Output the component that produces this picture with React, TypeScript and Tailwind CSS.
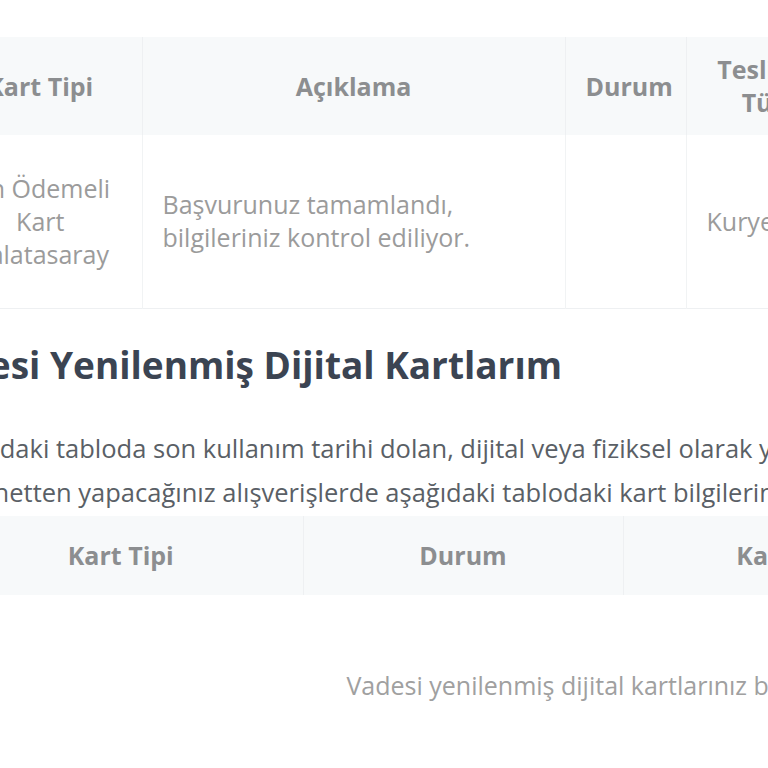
const font = { fontFamily: '"Open Sans", "Liberation Sans", sans-serif' };

const thCls =
  'bg-[#f7f9fa] border-r border-[#eef0f2] px-5 text-center align-middle text-[25px] leading-[33px] font-bold text-[#8c8e90]';

const tdCls = 'border-r border-[#f1f3f4] px-5 text-[25px] leading-[33px] text-[#9b9b9b]';

function CardsTable() {
  return (
    <table className="table-fixed border-collapse w-[1385px]">
      <colgroup>
        <col className="w-[203px]" />
        <col className="w-[423px]" />
        <col className="w-[121px]" />
        <col className="w-[170px]" />
        <col className="w-[212px]" />
        <col className="w-[256px]" />
      </colgroup>
      <thead>
        <tr className="h-[98px]">
          <th className={thCls}>Kart Tipi</th>
          <th className={thCls}>Açıklama</th>
          <th className={thCls}>Durum</th>
          <th className={thCls}>Teslimat Türü</th>
          <th className={thCls}>Başvuru Tarihi</th>
          <th className={thCls}>İşlem</th>
        </tr>
      </thead>
      <tbody>
        <tr className="h-[173px] border-b border-[#eef0f2]">
          <td className={`${tdCls} text-center`}>Ön Ödemeli Kart Galatasaray</td>
          <td className={`${tdCls} text-left`}>
            Başvurunuz tamamlandı, bilgileriniz kontrol ediliyor.
          </td>
          <td className={tdCls}></td>
          <td className={`${tdCls} text-left`}>Kurye</td>
          <td className={`${tdCls} text-center`}>12.03.2021</td>
          <td className="px-5"></td>
        </tr>
      </tbody>
    </table>
  );
}

function RenewedTable() {
  return (
    <table className="table-fixed border-collapse w-[1438px]">
      <colgroup>
        <col className="w-[364px]" />
        <col className="w-[320px]" />
        <col className="w-[410px]" />
        <col className="w-[344px]" />
      </colgroup>
      <thead>
        <tr className="h-[79px]">
          <th className={thCls}>Kart Tipi</th>
          <th className={thCls}>Durum</th>
          <th className={thCls}>Kart Numarası</th>
          <th className={thCls}>Son Kullanma Tarihi</th>
        </tr>
      </thead>
      <tbody>
        <tr className="h-[182px]">
          <td colSpan={4} className="px-5 text-center text-[25px] leading-[33px] text-[#a0a0a0]">
            Vadesi yenilenmiş dijital kartlarınız bulunmamaktadır.
          </td>
        </tr>
      </tbody>
    </table>
  );
}

export default function App() {
  return (
    <div className="w-[768px] h-[768px] overflow-hidden bg-white" style={font}>
      <div className="ml-[-61px] w-[1500px] pt-[37px]">
        <CardsTable />

        <h2 className="mt-[34px] ml-[-20px] text-[37px] leading-[44px] font-bold text-[#3b4452] whitespace-nowrap">
          Vadesi Yenilenmiş Dijital Kartlarım
        </h2>

        <p className="mt-[39px] ml-[-2px] text-[25.5px] leading-[44px] text-[#5a5f66] whitespace-nowrap">
          Aşağıdaki tabloda son kullanım tarihi dolan, dijital veya fiziksel olarak yenilenen kartlarınızı görebilirsiniz.
          <br />
          İnternetten yapacağınız alışverişlerde aşağıdaki tablodaki kart bilgilerini kullanabilirsiniz.
        </p>

        <div className="mt-[2px]">
          <RenewedTable />
        </div>
      </div>
    </div>
  );
}
